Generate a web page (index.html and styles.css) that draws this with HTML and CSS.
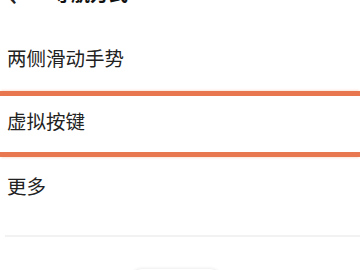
FILE: index.html
```html
<!DOCTYPE html>
<html lang="zh">
<head>
<meta charset="utf-8">
<link rel="stylesheet" href="styles.css">
</head>
<body>
<div class="page">
  <div class="header">
    <span class="back">‹</span>
    <span class="title">导航方式</span>
  </div>
  <div class="item">两侧滑动手势</div>
  <div class="item selected">虚拟按键</div>
  <div class="item last">更多</div>
  <div class="divider"></div>
  <div class="footer">
    <div class="button"></div>
  </div>
</div>
</body>
</html>
```
FILE: styles.css
```css
html, body {
  margin: 0;
  padding: 0;
  background: #ffffff;
}
.page {
  width: 360px;
  height: 270px;
  overflow: hidden;
  font-family: "Noto Sans CJK SC", "Noto Sans", sans-serif;
  color: #222222;
}
.header {
  height: 24px;
  display: flex;
  align-items: flex-start;
  padding-left: 8px;
  box-sizing: border-box;
  overflow: hidden;
}
.back {
  font-size: 30px;
  line-height: 24px;
  width: 44px;
  margin-top: -19px;
  color: #222;
  font-weight: 700;
}
.title {
  font-size: 19px;
  font-weight: 700;
  line-height: 24px;
  margin-top: -19px;
  color: #111;
}
.item {
  height: 65px;
  display: flex;
  align-items: center;
  padding-left: 7px;
  font-size: 19.5px;
  box-sizing: border-box;
  padding-top: 1px;
}
.item.selected {
  margin-top: 2px;
  height: 66px;
  border-top: 5px solid #e8774f;
  border-bottom: 5px solid #e8774f;
  box-shadow: 0 -2px 2px -1px #fbe5d8, 0 2px 2px -1px #fbe5d8;
  padding-top: 0;
  padding-bottom: 8px;
}
.item.last {
  height: 78px;
  padding-bottom: 23px;
}
.divider {
  margin-left: 5px;
  height: 2px;
  background: #f2f2f2;
}
.footer {
  display: flex;
  justify-content: center;
  padding-top: 32px;
  padding-right: 8px;
}
.button {
  width: 96px;
  height: 30px;
  border-radius: 15px;
  background: #ffffff;
  box-shadow: 0 -1px 3px rgba(0,0,0,0.07);
}
```
